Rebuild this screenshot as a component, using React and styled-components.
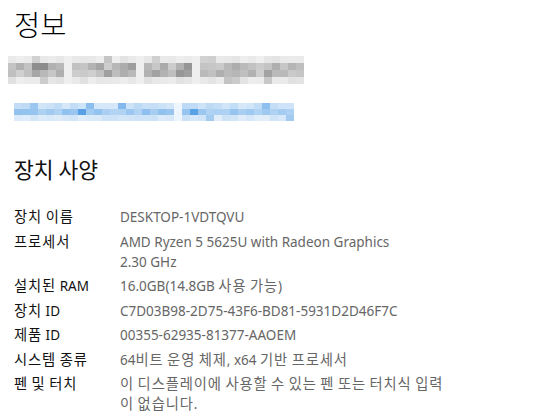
import React from "react";
import styled, { createGlobalStyle } from "styled-components";

const GlobalStyle = createGlobalStyle`
  html, body {
    margin: 0;
    padding: 0;
    background: #ffffff;
  }
  body {
    font-family: "Noto Sans", "Noto Sans CJK KR", sans-serif;
    -webkit-font-smoothing: antialiased;
  }
`;

const Page = styled.div`
  width: 533px;
  height: 420px;
  overflow: hidden;
  padding: 0 14px;
  box-sizing: border-box;
  background: #fff;
`;

const Title = styled.h1`
  margin: 0;
  padding-top: 5px;
  font-family: "Noto Sans CJK KR", sans-serif;
  font-weight: 300;
  font-size: 28.5px;
  line-height: 38px;
  color: #000;
`;

const MosaicGrid = styled.div`
  display: grid;
  grid-template-columns: repeat(${p => p.$cols}, ${p => p.$cell}px);
  grid-auto-rows: ${p => p.$rowH}px;
  margin-left: ${p => p.$offset}px;
  margin-top: ${p => p.$top}px;
  width: max-content;
`;

const Cell = styled.div``;

const SectionTitle = styled.h2`
  margin: 33px 0 0;
  font-family: "Noto Sans CJK KR", sans-serif;
  font-weight: 400;
  font-size: 21.5px;
  line-height: 30px;
  color: #111;
`;

const SpecList = styled.dl`
  margin: 23px 0 0;
  display: grid;
  grid-template-columns: 106px 1fr;
  row-gap: 4.5px;
`;

const Label = styled.dt`
  margin: 0;
  font-family: "Noto Sans", "Noto Sans CJK KR", sans-serif;
  font-size: 13.5px;
  line-height: 20px;
  color: #111;
`;

const Value = styled.dd`
  margin: 0;
  font-family: "Noto Sans", "Noto Sans CJK KR", sans-serif;
  font-size: 13.5px;
  line-height: 20px;
  color: #666;
`;

// Hangul in the original font runs wider than Latin, so widen it a little
const Hangul = styled.span`
  font-family: "Noto Sans CJK KR", sans-serif;
  font-size: 1.06em;
  letter-spacing: 0.9px;
  line-height: 1;
`;

const Mixed = ({ text }) =>
  text.split(/([\uAC00-\uD7A3]+)/).map((part, i) =>
    /[\uAC00-\uD7A3]/.test(part) ? <Hangul key={i}>{part}</Hangul> : part
  );

// simple seeded noise so the blurred strips look the same on each render
const rand = seed => {
  let s = seed;
  return () => {
    s = (s * 9301 + 49297) % 233280;
    return s / 233280;
  };
};

const grayStrip = () => {
  const r = rand(7);
  const cols = 37;
  const gaps = [7, 16, 23];
  const rows = [
    [240, 14],
    [205, 38],
    [208, 34],
    [238, 14],
  ];
  return rows.flatMap(([base, spread]) =>
    Array.from({ length: cols }, (_, i) => {
      if (gaps.includes(i)) return "#efefef";
      const v = Math.round(base - r() * spread + (r() > 0.85 ? -30 : 0));
      return `rgb(${v},${v},${v})`;
    })
  );
};

const blueStrip = () => {
  const r = rand(13);
  const cols = 35;
  const rows = [
    [0.2, 0.15],
    [0.38, 0.2],
    [0.15, 0.12],
  ];
  return rows.flatMap(([base, spread]) =>
    Array.from({ length: cols }, (_, i) => {
      if (i === 20) return "#eef6fd";
      let t = base + r() * spread;
      if (r() > 0.88) t += 0.3;
      const mix = b => Math.round(255 - (255 - b) * t);
      return `rgb(${mix(60)},${mix(145)},${mix(225)})`;
    })
  );
};

const Mosaic = ({ colors, cols, cell, rowH, offset, top }) => (
  <MosaicGrid $cols={cols} $cell={cell} $rowH={rowH} $offset={offset} $top={top}>
    {colors.map((c, i) => (
      <Cell key={i} style={{ background: c }} />
    ))}
  </MosaicGrid>
);

const specs = [
  ["장치 이름", "DESKTOP-1VDTQVU"],
  ["프로세서", "AMD Ryzen 5 5625U with Radeon Graphics\n2.30 GHz"],
  ["설치된 RAM", "16.0GB(14.8GB 사용 가능)"],
  ["장치 ID", "C7D03B98-2D75-43F6-BD81-5931D2D46F7C"],
  ["제품 ID", "00355-62935-81377-AAOEM"],
  ["시스템 종류", "64비트 운영 체제, x64 기반 프로세서"],
  ["펜 및 터치", "이 디스플레이에 사용할 수 있는 펜 또는 터치식 입력\n이 없습니다."],
];

export default function App() {
  return (
    <>
      <GlobalStyle />
      <Page>
        <Title>정보</Title>
        <Mosaic colors={grayStrip()} cols={37} cell={8} rowH={7} offset={-6} top={13} />
        <Mosaic colors={blueStrip()} cols={35} cell={8} rowH={6} offset={0} top={19} />
        <SectionTitle>장치 사양</SectionTitle>
        <SpecList>
          {specs.map(([k, v]) => (
            <React.Fragment key={k}>
              <Label>
                <Mixed text={k} />
              </Label>
              <Value>
                {v.split("\n").map((line, i) => (
                  <div key={i}>
                    <Mixed text={line} />
                  </div>
                ))}
              </Value>
            </React.Fragment>
          ))}
        </SpecList>
      </Page>
    </>
  );
}
